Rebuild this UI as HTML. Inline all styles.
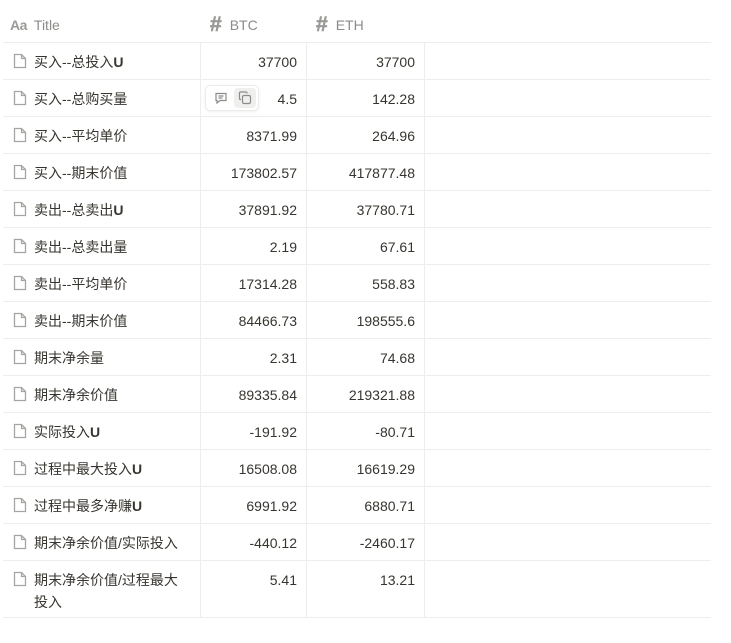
<!DOCTYPE html>
<html><head><meta charset="utf-8"><style>
*{margin:0;padding:0;box-sizing:border-box}
body{width:731px;height:643px;background:#fff;font-family:"Liberation Sans","Noto Sans CJK SC",sans-serif;color:#37352f;font-size:14px;position:relative;overflow:hidden}
.hdr{position:absolute;top:6px;height:37px;display:flex;align-items:center;color:#8c8b88;font-size:14px}
.row{position:absolute;left:3px;width:708px;border-bottom:1px solid #ededec;margin-top:1px}
.c1{position:absolute;left:31px;top:8px;width:165px;line-height:22px}
.ic{position:absolute;left:10px;top:10px}
.n{position:absolute;top:8px;text-align:right;line-height:22px}
.n1{right:414px}.n2{right:296px}
.vl{position:absolute;top:42px;height:576px;width:1px;background:#ededec}
.top{position:absolute;left:3px;top:42px;width:708px;height:1px;background:#ededec}
b{font-weight:bold}
</style></head><body>
<div class="hdr" style="left:10px"><span style="font-weight:bold;color:#9b9a97;font-size:14px;letter-spacing:-0.5px">Aa</span><span style="margin-left:7px">Title</span></div>
<div class="hdr" style="left:210px"><span style="font-size:21px;font-weight:bold;color:#9b9a97;-webkit-text-stroke:0.6px #9b9a97">#</span><span style="margin-left:8px">BTC</span></div>
<div class="hdr" style="left:316px"><span style="font-size:21px;font-weight:bold;color:#9b9a97;-webkit-text-stroke:0.6px #9b9a97">#</span><span style="margin-left:8px">ETH</span></div>
<div class="top"></div>
<div class="vl" style="left:200px"></div>
<div class="vl" style="left:306px"></div>
<div class="vl" style="left:424px"></div>
<div class="row" style="top:42px;height:37px"><svg class="ic" width="14" height="16" viewBox="0 0 14 16"><path d="M1.5 1.5h7l4 4v9h-11z M8.5 1.5v4h4" fill="none" stroke="#a5a4a1" stroke-width="1.3"/></svg><div class="c1">买入--总投入<b>U</b></div><div class="n n1">37700</div><div class="n n2">37700</div></div>
<div class="row" style="top:79px;height:37px"><svg class="ic" width="14" height="16" viewBox="0 0 14 16"><path d="M1.5 1.5h7l4 4v9h-11z M8.5 1.5v4h4" fill="none" stroke="#a5a4a1" stroke-width="1.3"/></svg><div class="c1">买入--总购买量</div><div class="n n1">4.5</div><div class="n n2">142.28</div>
<div style="position:absolute;left:202px;top:5px;width:54px;height:26px;border:1px solid #ebebea;border-radius:5px;background:#fff;box-shadow:0 1px 3px rgba(0,0,0,.06)">
<svg style="position:absolute;left:8px;top:6px" width="14" height="13" viewBox="0 0 14 13"><path d="M2 1.5h10v7H6l-3 2.5v-2.5H2z M4.5 4h5 M4.5 6h4" fill="none" stroke="#8c8b88" stroke-width="1.2"/></svg>
<div style="position:absolute;left:28px;top:2px;width:22px;height:20px;background:#efefee;border-radius:4px"></div>
<svg style="position:absolute;left:32px;top:5px" width="14" height="14" viewBox="0 0 14 14"><rect x="4.5" y="4.5" width="8" height="8" rx="1.5" fill="none" stroke="#8c8b88" stroke-width="1.2"/><path d="M9 2.5V2a1 1 0 0 0-1-1H2.5a1 1 0 0 0-1 1v5.5a1 1 0 0 0 1 1H3" fill="none" stroke="#8c8b88" stroke-width="1.2"/></svg>
</div></div>
<div class="row" style="top:116px;height:37px"><svg class="ic" width="14" height="16" viewBox="0 0 14 16"><path d="M1.5 1.5h7l4 4v9h-11z M8.5 1.5v4h4" fill="none" stroke="#a5a4a1" stroke-width="1.3"/></svg><div class="c1">买入--平均单价</div><div class="n n1">8371.99</div><div class="n n2">264.96</div></div>
<div class="row" style="top:153px;height:37px"><svg class="ic" width="14" height="16" viewBox="0 0 14 16"><path d="M1.5 1.5h7l4 4v9h-11z M8.5 1.5v4h4" fill="none" stroke="#a5a4a1" stroke-width="1.3"/></svg><div class="c1">买入--期末价值</div><div class="n n1">173802.57</div><div class="n n2">417877.48</div></div>
<div class="row" style="top:190px;height:37px"><svg class="ic" width="14" height="16" viewBox="0 0 14 16"><path d="M1.5 1.5h7l4 4v9h-11z M8.5 1.5v4h4" fill="none" stroke="#a5a4a1" stroke-width="1.3"/></svg><div class="c1">卖出--总卖出<b>U</b></div><div class="n n1">37891.92</div><div class="n n2">37780.71</div></div>
<div class="row" style="top:227px;height:37px"><svg class="ic" width="14" height="16" viewBox="0 0 14 16"><path d="M1.5 1.5h7l4 4v9h-11z M8.5 1.5v4h4" fill="none" stroke="#a5a4a1" stroke-width="1.3"/></svg><div class="c1">卖出--总卖出量</div><div class="n n1">2.19</div><div class="n n2">67.61</div></div>
<div class="row" style="top:264px;height:37px"><svg class="ic" width="14" height="16" viewBox="0 0 14 16"><path d="M1.5 1.5h7l4 4v9h-11z M8.5 1.5v4h4" fill="none" stroke="#a5a4a1" stroke-width="1.3"/></svg><div class="c1">卖出--平均单价</div><div class="n n1">17314.28</div><div class="n n2">558.83</div></div>
<div class="row" style="top:301px;height:37px"><svg class="ic" width="14" height="16" viewBox="0 0 14 16"><path d="M1.5 1.5h7l4 4v9h-11z M8.5 1.5v4h4" fill="none" stroke="#a5a4a1" stroke-width="1.3"/></svg><div class="c1">卖出--期末价值</div><div class="n n1">84466.73</div><div class="n n2">198555.6</div></div>
<div class="row" style="top:338px;height:37px"><svg class="ic" width="14" height="16" viewBox="0 0 14 16"><path d="M1.5 1.5h7l4 4v9h-11z M8.5 1.5v4h4" fill="none" stroke="#a5a4a1" stroke-width="1.3"/></svg><div class="c1">期末净余量</div><div class="n n1">2.31</div><div class="n n2">74.68</div></div>
<div class="row" style="top:375px;height:37px"><svg class="ic" width="14" height="16" viewBox="0 0 14 16"><path d="M1.5 1.5h7l4 4v9h-11z M8.5 1.5v4h4" fill="none" stroke="#a5a4a1" stroke-width="1.3"/></svg><div class="c1">期末净余价值</div><div class="n n1">89335.84</div><div class="n n2">219321.88</div></div>
<div class="row" style="top:412px;height:37px"><svg class="ic" width="14" height="16" viewBox="0 0 14 16"><path d="M1.5 1.5h7l4 4v9h-11z M8.5 1.5v4h4" fill="none" stroke="#a5a4a1" stroke-width="1.3"/></svg><div class="c1">实际投入<b>U</b></div><div class="n n1">-191.92</div><div class="n n2">-80.71</div></div>
<div class="row" style="top:449px;height:37px"><svg class="ic" width="14" height="16" viewBox="0 0 14 16"><path d="M1.5 1.5h7l4 4v9h-11z M8.5 1.5v4h4" fill="none" stroke="#a5a4a1" stroke-width="1.3"/></svg><div class="c1">过程中最大投入<b>U</b></div><div class="n n1">16508.08</div><div class="n n2">16619.29</div></div>
<div class="row" style="top:486px;height:37px"><svg class="ic" width="14" height="16" viewBox="0 0 14 16"><path d="M1.5 1.5h7l4 4v9h-11z M8.5 1.5v4h4" fill="none" stroke="#a5a4a1" stroke-width="1.3"/></svg><div class="c1">过程中最多净赚<b>U</b></div><div class="n n1">6991.92</div><div class="n n2">6880.71</div></div>
<div class="row" style="top:523px;height:37px"><svg class="ic" width="14" height="16" viewBox="0 0 14 16"><path d="M1.5 1.5h7l4 4v9h-11z M8.5 1.5v4h4" fill="none" stroke="#a5a4a1" stroke-width="1.3"/></svg><div class="c1">期末净余价值/实际投入</div><div class="n n1">-440.12</div><div class="n n2">-2460.17</div></div>
<div class="row" style="top:560px;height:57px"><svg class="ic" width="14" height="16" viewBox="0 0 14 16"><path d="M1.5 1.5h7l4 4v9h-11z M8.5 1.5v4h4" fill="none" stroke="#a5a4a1" stroke-width="1.3"/></svg><div class="c1" style="width:155px">期末净余价值/过程最大投入</div><div class="n n1">5.41</div><div class="n n2">13.21</div></div>
</body></html>
